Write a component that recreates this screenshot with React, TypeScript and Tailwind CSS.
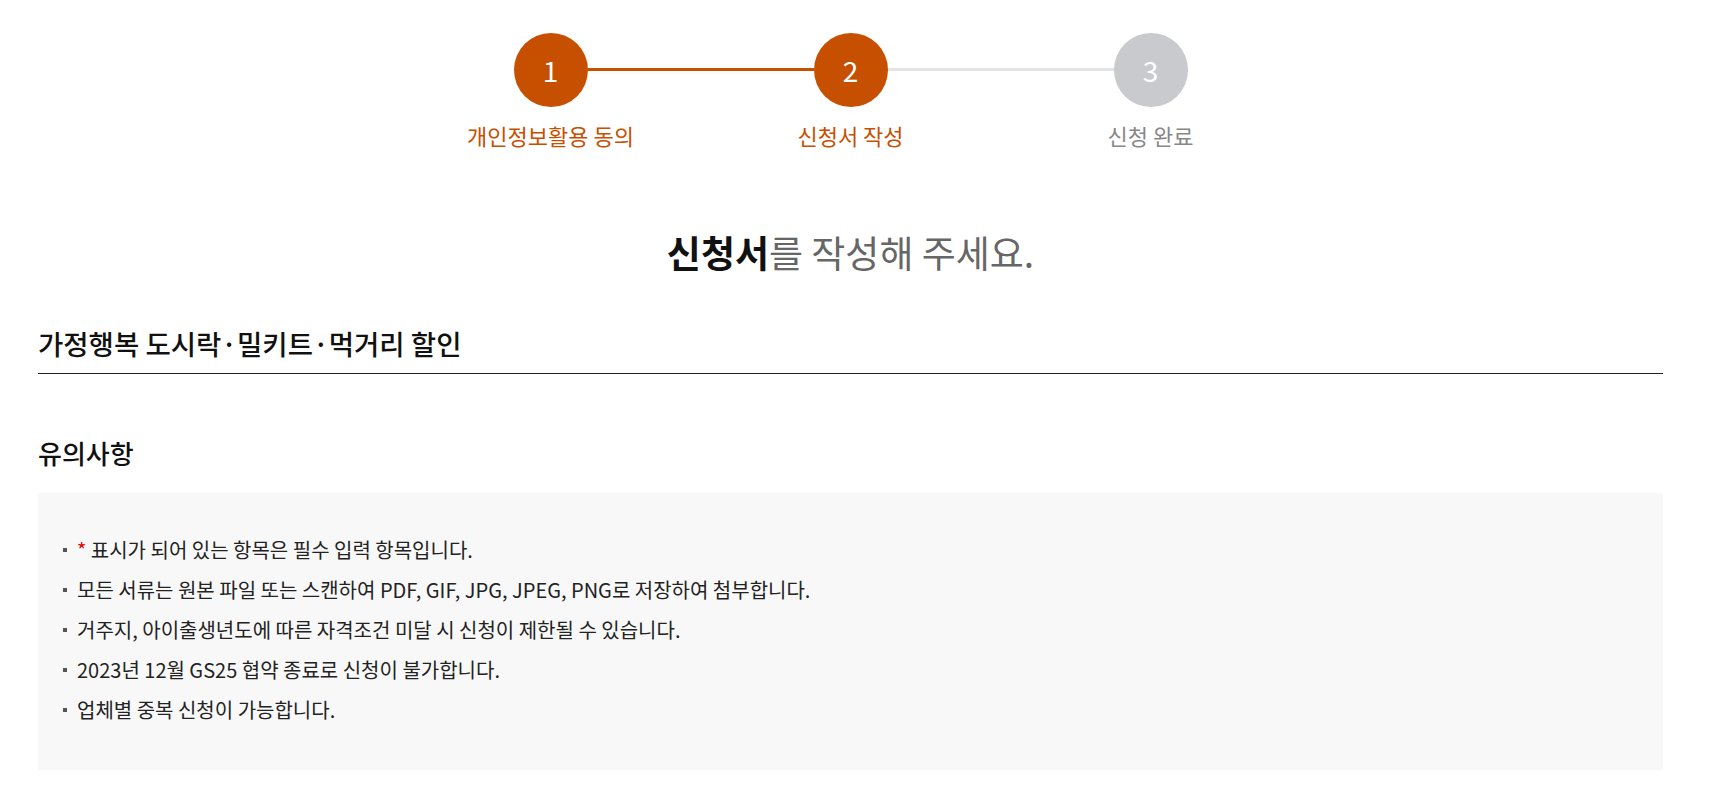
import React from 'react';

const font = { fontFamily: '"Noto Sans CJK KR", "Noto Sans", sans-serif' };

const steps = [
  { num: 1, label: '개인정보활용 동의', state: 'done' },
  { num: 2, label: '신청서 작성', state: 'current' },
  { num: 3, label: '신청 완료', state: 'todo' },
];

const notices: React.ReactNode[] = [
  <>
    <span className="text-[#e60000]">*</span> 표시가 되어 있는 항목은 필수 입력 항목입니다.
  </>,
  '모든 서류는 원본 파일 또는 스캔하여 PDF, GIF, JPG, JPEG, PNG로 저장하여 첨부합니다.',
  '거주지, 아이출생년도에 따른 자격조건 미달 시 신청이 제한될 수 있습니다.',
  '2023년 12월 GS25 협약 종료로 신청이 불가합니다.',
  '업체별 중복 신청이 가능합니다.',
];

const Stepper: React.FC = () => (
  <div className="flex justify-center pt-[33px]">
    {steps.map((step, i) => (
      <div key={step.num} className="relative flex w-[300px] flex-col items-center">
        {/* connector to the next step */}
        {i < steps.length - 1 && (
          <div
            className={
              'absolute top-[35px] left-[187px] h-[3px] w-[226px] ' +
              (step.state === 'done' ? 'bg-[#c75000]' : 'bg-[#e3e3e3]')
            }
          />
        )}
        <div
          className={
            'relative z-10 flex h-[74px] w-[74px] items-center justify-center rounded-full text-[28px] text-white ' +
            (step.state === 'todo' ? 'bg-[#c8cacd]' : 'bg-[#c75000]')
          }
        >
          {step.num}
        </div>
        <p
          className={
            'mt-[13px] text-[22px] leading-[30px] ' +
            (step.state === 'todo' ? 'text-[#888888]' : 'text-[#c75000]')
          }
        >
          {step.label}
        </p>
      </div>
    ))}
  </div>
);

export default function App() {
  return (
    <div className="min-h-screen bg-white" style={font}>
      <div className="ml-[38px] w-[1625px]">
        <Stepper />

        <h1 className="mt-[75px] text-center text-[37px] leading-[54px] text-[#666666]">
          <strong className="font-bold text-[#111111]">신청서</strong>를 작성해 주세요.
        </h1>

        <h2 className="mt-[44px] border-b border-[#222222] pb-[10px] text-[27.5px] font-medium leading-[40px] text-[#111111]">
          가정행복 도시락·밀키트·먹거리 할인
        </h2>

        <h3 className="mt-[61px] text-[26px] font-medium leading-[36px] text-[#111111]">유의사항</h3>

        <div className="mt-[22px] bg-[#f8f8f8] pt-[37px] pb-[40px] pl-[39px]">
          <ul className="flex flex-col">
            {notices.map((n, i) => (
              <li key={i} className="relative text-[20px] leading-[40px] text-[#222222]">
                <span className="absolute top-[18px] left-[-14px] h-[4px] w-[4px] bg-[#555555]" />
                {n}
              </li>
            ))}
          </ul>
        </div>
      </div>
    </div>
  );
}
